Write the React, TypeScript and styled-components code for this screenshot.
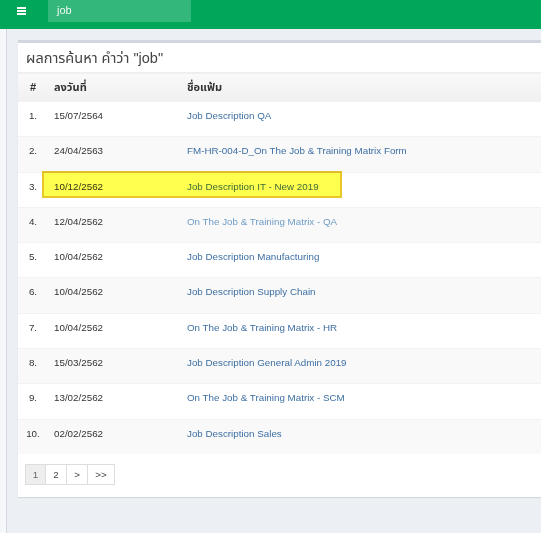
import React from "react";
import styled, { createGlobalStyle } from "styled-components";

const Global = createGlobalStyle`
  html, body { margin: 0; padding: 0; }
  body {
    width: 541px;
    height: 533px;
    overflow: hidden;
    background: #ecf0f5;
    font-family: "Liberation Sans", Arial, "Noto Sans Thai", "Tahoma", sans-serif;
  }
`;

const TopBar = styled.header`
  height: 29px;
  background: #00a65a;
  display: flex;
  align-items: flex-start;
`;

const Burger = styled.button`
  width: 48px;
  height: 22px;
  border: 0;
  padding: 7px 0 0 17px;
  background: transparent;
  display: flex;
  flex-direction: column;
  gap: 1px;
  box-sizing: border-box;
  span {
    display: block;
    width: 9px;
    height: 2px;
    background: #fff;
  }
`;

const Search = styled.div`
  width: 143px;
  height: 22px;
  background: rgba(255, 255, 255, 0.2);
  color: #f2f7f4;
  font-size: 11px;
  line-height: 21px;
  padding-left: 9px;
  box-sizing: border-box;
`;

const Body = styled.div`
  display: flex;
  height: 504px;
`;

const Sidebar = styled.aside`
  width: 6px;
  flex: none;
  background: #f5f7fa;
  border-right: 1px solid #d2d6de;
`;

const Content = styled.main`
  flex: 1;
  overflow: hidden;
  padding: 11px 0 0 11px;
`;

const Box = styled.section`
  width: 560px;
  background: #fff;
  border-top: 3px solid #d2d6de;
  box-shadow: 0 1px 1px rgba(0, 0, 0, 0.1);
  padding-bottom: 12px;
`;

const Title = styled.h3`
  margin: 0;
  height: 29px;
  padding: 6px 0 0 8px;
  box-sizing: border-box;
  font-size: 14.5px;
  font-weight: normal;
  color: #444;
  line-height: 18px;
`;

const TableWrap = styled.div`
  position: relative;
`;

const Table = styled.table`
  width: 100%;
  border-collapse: collapse;
  font-size: 9.8px;
  color: #333;
`;

const Th = styled.th<{ $w?: number; $center?: boolean }>`
  width: ${(p) => (p.$w ? `${p.$w}px` : "auto")};
  text-align: ${(p) => (p.$center ? "center" : "left")};
  padding: 6px 6px 6px;
  line-height: 16px;
  font-size: 11px;
  font-weight: bold;
  color: #333;
  box-sizing: border-box;
`;

const HeadRow = styled.tr`
  background: linear-gradient(#f9f9f9, #f0f0f0);
  border-top: 1px solid #eeeeee;
`;

const Row = styled.tr<{ $odd: boolean }>`
  background: ${(p) => (p.$odd ? "#f9f9f9" : "#fff")};
  border-top: 1px solid #f2f2f2;
`;

const Td = styled.td<{ $center?: boolean }>`
  text-align: ${(p) => (p.$center ? "center" : "left")};
  padding: 6px 6px 12.3px;
  line-height: 16px;
  white-space: nowrap;
`;

const FileLink = styled.a<{ $light?: boolean }>`
  color: ${(p) => (p.$light ? "#6f9cc6" : "#3d6fa3")};
  text-decoration: none;
`;

const Highlight = styled.div`
  position: absolute;
  left: 24px;
  top: 99px;
  width: 300px;
  height: 27px;
  box-sizing: border-box;
  background: #ffff50;
  border: 2px solid #e9c62a;
  mix-blend-mode: multiply;
  pointer-events: none;
`;

const Pager = styled.nav`
  display: flex;
  margin: 10px 0 0 7px;
`;

const PageBtn = styled.span<{ $w: number; $active?: boolean }>`
  width: ${(p) => p.$w}px;
  height: 21px;
  box-sizing: border-box;
  border: 1px solid #dddddd;
  margin-left: -1px;
  &:first-child { margin-left: 0; }
  background: ${(p) => (p.$active ? "#eeeeee" : "#fff")};
  color: ${(p) => (p.$active ? "#666" : "#444")};
  font-size: 9.8px;
  display: flex;
  align-items: center;
  justify-content: center;
`;

const rows: { d: string; f: string; light?: boolean }[] = [
  { d: "15/07/2564", f: "Job Description QA" },
  { d: "24/04/2563", f: "FM-HR-004-D_On The Job & Training Matrix Form" },
  { d: "10/12/2562", f: "Job Description IT - New 2019" },
  { d: "12/04/2562", f: "On The Job & Training Matrix - QA", light: true },
  { d: "10/04/2562", f: "Job Description Manufacturing" },
  { d: "10/04/2562", f: "Job Description Supply Chain" },
  { d: "10/04/2562", f: "On The Job & Training Matrix - HR" },
  { d: "15/03/2562", f: "Job Description General Admin 2019" },
  { d: "13/02/2562", f: "On The Job & Training Matrix - SCM" },
  { d: "02/02/2562", f: "Job Description Sales" },
];

export default function App() {
  return (
    <>
      <Global />
      <TopBar>
        <Burger aria-label="menu">
          <span />
          <span />
          <span />
        </Burger>
        <Search>job</Search>
      </TopBar>
      <Body>
        <Sidebar />
        <Content>
          <Box>
            <Title>ผลการค้นหา คำว่า "job"</Title>
            <TableWrap>
              <Table>
                <thead>
                  <HeadRow>
                    <Th $w={30} $center>#</Th>
                    <Th $w={133}>ลงวันที่</Th>
                    <Th>ชื่อแฟ้ม</Th>
                  </HeadRow>
                </thead>
                <tbody>
                  {rows.map((r, i) => (
                    <Row key={i} $odd={i % 2 === 1}>
                      <Td $center>{i + 1}.</Td>
                      <Td>{r.d}</Td>
                      <Td>
                        <FileLink href="#" $light={r.light}>{r.f}</FileLink>
                      </Td>
                    </Row>
                  ))}
                </tbody>
              </Table>
              <Highlight />
            </TableWrap>
            <Pager>
              <PageBtn $w={21} $active>1</PageBtn>
              <PageBtn $w={22}>2</PageBtn>
              <PageBtn $w={22}>&gt;</PageBtn>
              <PageBtn $w={28}>&gt;&gt;</PageBtn>
            </Pager>
          </Box>
        </Content>
      </Body>
    </>
  );
}
